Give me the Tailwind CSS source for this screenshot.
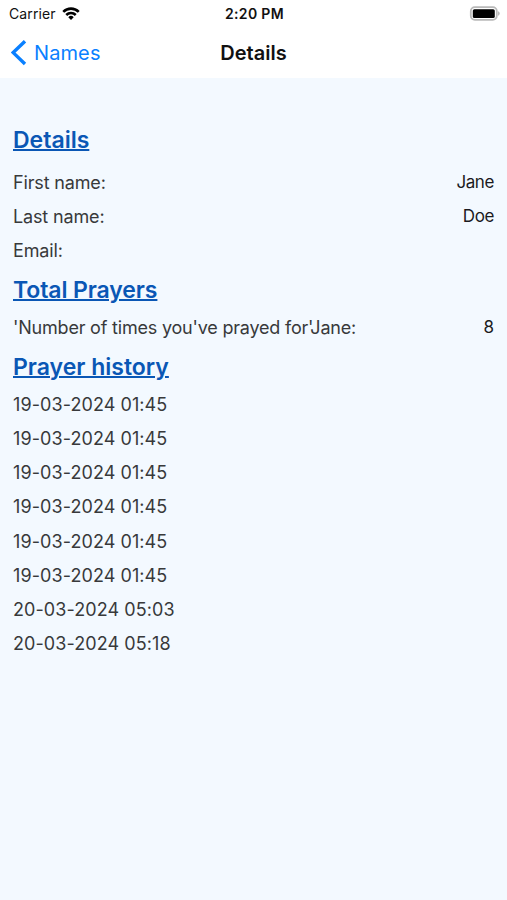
<!DOCTYPE html>
<html lang="en">

  <head>
    <meta charset="UTF-8" />
    <meta name="viewport" content="width=device-width, initial-scale=1.0" />
    <title>Details</title>
    <script src="https://cdn.jsdelivr.net/npm/@tailwindcss/browser@4"></script>
  </head>

  <body class="min-h-screen bg-[#f3f9ff] font-['Inter',sans-serif] text-[#38393b]">
    <header class="h-[78px] bg-white text-[#111]">
      <!-- Status bar -->
      <div class="grid h-[27px] grid-cols-3 items-center pl-[9px] pr-[7px] text-[14px]">
        <div class="flex items-center gap-[6px]">
          <span class="tracking-[0.1px]">Carrier</span>
          <svg class="h-[14px] w-[18px]" viewBox="0 0 19 15" fill="none" stroke="#000" stroke-width="2.8">
            <path d="M1.2 5.2a11.8 11.8 0 0 1 16.6 0" />
            <path d="M4.4 8.5a7.4 7.4 0 0 1 10.2 0" />
            <path d="M9.5 13.8 6.6 10.9a4.1 4.1 0 0 1 5.8 0z" fill="#000" stroke="none" />
          </svg>
        </div>
        <span class="text-center font-semibold tracking-[0.35px]">2:20 PM</span>
        <svg class="h-[15px] w-[31px] justify-self-end" viewBox="0 0 31 15">
          <rect x="1.8" y="1.2" width="26" height="12.6" rx="4" fill="none" stroke="#b9b9b9" stroke-width="1.8" />
          <rect x="3.8" y="3.2" width="22" height="8.8" rx="1.6" fill="#000" />
          <path d="M29 5.2v4.6a2.4 2.4 0 0 0 0-4.6z" fill="#b9b9b9" />
        </svg>
      </div>
      <!-- Navigation bar -->
      <nav class="grid h-[51px] grid-cols-3 items-center px-[11px] text-[20px]">
        <a href="#" class="flex items-center gap-[7px] text-[#0a80ff]">
          <svg class="h-[26px] w-[16px]" viewBox="0 0 16 26" fill="none" stroke="currentColor" stroke-width="3.4">
            <path d="M14 1.2 2.2 12.6 14 24" />
          </svg>
          <span class="tracking-[0.1px]">Names</span>
        </a>
        <h1 class="text-center font-semibold">Details</h1>
      </nav>
    </header>

    <main class="px-[13px] pt-[45px] text-[18px]">
      <h2 class="h-[43px] text-[23px] leading-[34px] font-semibold text-[#0a57b5] underline decoration-2">Details</h2>
      <dl class="tracking-[-0.15px]">
        <div class="flex h-[34px] items-center justify-between">
          <dt class="pb-[2px]">First name:</dt>
          <dd class="text-[17px] tracking-[-0.4px] text-[#1b1b1d]">Jane</dd>
        </div>
        <div class="flex h-[34px] items-center justify-between">
          <dt class="pb-[2px]">Last name:</dt>
          <dd class="text-[17px] tracking-[-0.4px] text-[#1b1b1d]">Doe</dd>
        </div>
        <div class="flex h-[34px] items-center justify-between">
          <dt class="pb-[2px]">Email:</dt>
        </div>
      </dl>
      <h2 class="mt-[5px] h-[38px] text-[23px] leading-[34px] font-semibold tracking-[-0.1px] text-[#0a57b5] underline decoration-2">Total Prayers</h2>
      <div class="flex h-[34px] items-center justify-between">
        <span class="pb-[2px] tracking-[-0.2px]">'Number of times you've prayed for'Jane:</span>
        <span class="text-[17px] text-[#1b1b1d]">8</span>
      </div>
      <h2 class="mt-[5px] h-[38px] text-[23px] leading-[34px] font-semibold text-[#0a57b5] underline decoration-2">Prayer history</h2>
      <ul class="leading-[34.15px] tracking-[0.08px]">
        <li>19-03-2024 01:45</li>
        <li>19-03-2024 01:45</li>
        <li>19-03-2024 01:45</li>
        <li>19-03-2024 01:45</li>
        <li>19-03-2024 01:45</li>
        <li>19-03-2024 01:45</li>
        <li>20-03-2024 05:03</li>
        <li>20-03-2024 05:18</li>
      </ul>
    </main>
  </body>

</html>
